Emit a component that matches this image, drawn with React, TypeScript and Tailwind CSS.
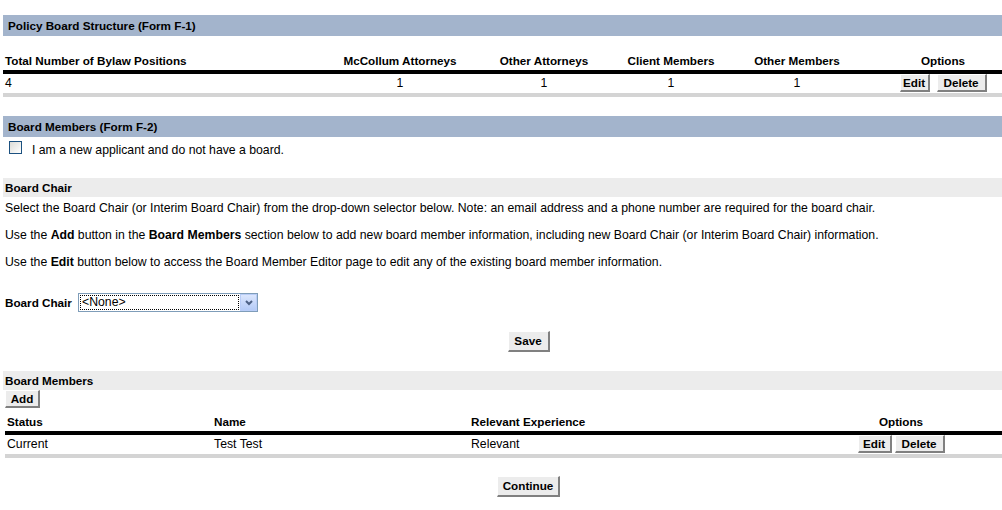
import React from "react";

const btn =
  "bg-[#ececec] border-t border-l border-t-[#ffffff] border-l-[#ffffff] border-r-2 border-b-2 border-r-[#808080] border-b-[#808080] text-[11.7px] font-bold leading-none text-black flex items-center justify-center";

function Btn({ label, w, h = 19 }: { label: string; w: number; h?: number }) {
  return (
    <div className={btn} style={{ width: w, height: h }}>
      {label}
    </div>
  );
}

function Bar({ children, blue }: { children: React.ReactNode; blue?: boolean }) {
  return (
    <div
      className={
        blue
          ? "h-[21px] bg-[#a3b4cc] pl-[5px] flex items-center text-[11.7px] font-bold"
          : "h-[19px] bg-[#ececec] pl-[2px] flex items-center text-[11.7px] font-bold"
      }
    >
      {children}
    </div>
  );
}

const th = "h-[38px] flex items-end pb-[2px] leading-[14px] font-bold text-[11.7px] border-b-4 border-black";
const td = "h-[23px] flex items-center border-b-4 border-[#d4d4d4]";
const th2 = "h-[27px] flex items-end pb-[2px] leading-[14px] font-bold text-[11.7px] border-b-4 border-black";

export default function App() {
  return (
    <div className="w-[1002px] h-[510px] overflow-hidden bg-white text-black font-['Liberation_Sans',Arial,sans-serif] pl-[3px] pt-[15px]">
      <Bar blue>Policy Board Structure (Form F-1)</Bar>

      {/* Table 1 */}
      <div className="grid grid-cols-[317px_160px_128px_126px_126px_1fr] text-[12.25px]">
        <div className={`${th} pl-[2px]`}>Total Number of Bylaw Positions</div>
        <div className={`${th} justify-center`}>McCollum Attorneys</div>
        <div className={`${th} justify-center`}>Other Attorneys</div>
        <div className={`${th} justify-center`}>Client Members</div>
        <div className={`${th} justify-center`}>Other Members</div>
        <div className={`${th} justify-center pl-[24px]`}>Options</div>

        <div className={`${td} pl-[2px]`}>4</div>
        <div className={`${td} justify-center`}>1</div>
        <div className={`${td} justify-center`}>1</div>
        <div className={`${td} justify-center`}>1</div>
        <div className={`${td} justify-center`}>1</div>
        <div className="h-[23px] flex items-start justify-center pl-[24px] gap-[7px] border-b-4 border-[#d4d4d4]">
          <Btn label="Edit" w={30} h={18} />
          <Btn label="Delete" w={50} h={18} />
        </div>
      </div>

      <div className="mt-[19px]">
        <Bar blue>Board Members (Form F-2)</Bar>
      </div>

      <div className="flex items-end h-[20px] pl-[6px]">
        <div className="w-[13px] h-[13px] border border-[#1c5180] bg-gradient-to-br from-[#dcdcd7] to-[#ffffff] mb-[3px]" />
        <span className="ml-[10px] text-[12.25px] leading-[14px]">I am a new applicant and do not have a board.</span>
      </div>

      <div className="mt-[21px]">
        <Bar>Board Chair</Bar>
      </div>

      <div className="pl-[2px] text-[12.25px] leading-[14px]">
        <p className="mt-[4px]">
          Select the Board Chair (or Interim Board Chair) from the drop-down selector below. Note: an email address and a phone number are required for the board chair.
        </p>
        <p className="mt-[13px]">
          Use the <b>Add</b> button in the <b>Board Members</b> section below to add new board member information, including new Board Chair (or Interim Board Chair) information.
        </p>
        <p className="mt-[13px]">
          Use the <b>Edit</b> button below to access the Board Member Editor page to edit any of the existing board member information.
        </p>
      </div>

      <div className="mt-[24px] flex items-center pl-[2px]">
        <span className="text-[11.7px] font-bold w-[73px]">Board Chair</span>
        <div className="w-[180px] h-[19px] border border-[#7f9db9] flex items-stretch bg-white">
          <div className="flex-1 m-[1px] border border-dotted border-black flex items-center text-[12.25px] pl-[1px]">&lt;None&gt;</div>
          <div className="w-[17px] bg-gradient-to-b from-[#dbe6fd] to-[#b5cbf7] border border-[#b9cdf7] flex items-center justify-center">
            <svg width="8" height="6" viewBox="0 0 8 6">
              <path d="M1 1 L4 4 L7 1" stroke="#4d6185" strokeWidth="2" fill="none" />
            </svg>
          </div>
        </div>
      </div>

      <div className="mt-[19px] flex justify-center">
        <div className="ml-[52px]">
          <Btn label="Save" w={42} h={21} />
        </div>
      </div>

      <div className="mt-[19px]">
        <Bar>Board Members</Bar>
      </div>
      <div className="pl-[2px]">
        <Btn label="Add" w={35} h={18} />
      </div>

      {/* Table 2 */}
      <div className="ml-[2px] grid grid-cols-[207px_257px_331px_1fr] text-[12.25px]">
        <div className={`${th2} pl-[2px]`}>Status</div>
        <div className={`${th2} pl-[2px]`}>Name</div>
        <div className={`${th2} pl-[2px]`}>Relevant Experience</div>
        <div className={`${th2} justify-center`}>Options</div>

        <div className={`${td} pl-[2px]`}>Current</div>
        <div className={`${td} pl-[2px]`}>Test Test</div>
        <div className={`${td} pl-[2px]`}>Relevant</div>
        <div className="h-[23px] flex items-start justify-center gap-[3px] border-b-4 border-[#d4d4d4]">
          <Btn label="Edit" w={34} h={18} />
          <Btn label="Delete" w={50} h={18} />
        </div>
      </div>

      <div className="mt-[18px] flex justify-center">
        <div className="ml-[52px]">
          <Btn label="Continue" w={63} h={21} />
        </div>
      </div>
    </div>
  );
}
